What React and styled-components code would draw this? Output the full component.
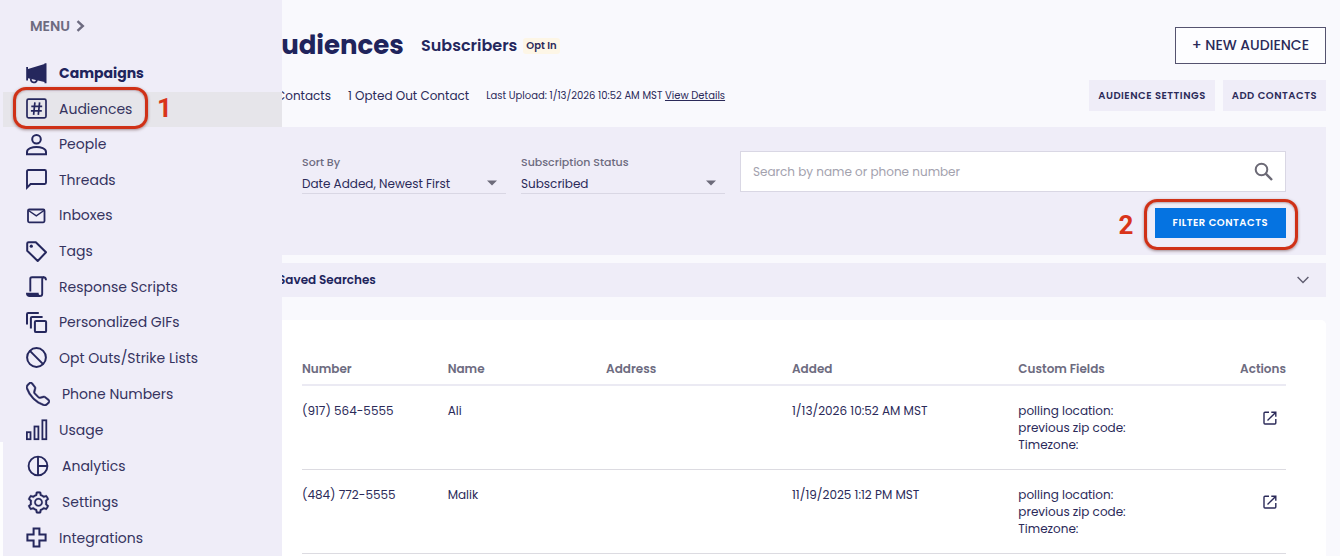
import React, { useState } from "react";
import styled, { createGlobalStyle } from "styled-components";
import { AiOutlineSetting } from "react-icons/ai";
import { BsTelephone } from "react-icons/bs";

const campaigns = (
  <svg width="22" height="22" viewBox="0 0 22 22" fill="none">
    <path
      d="M0.2 4h1.8v2L18.500 1V0.300h2v20h-2v-1.200L2 15.200v2.200H0.200z"
      fill="currentColor"
    />
    <path
      d="M4.900 15.400c-.4 2 .6 3.800 2.600 4 2 .1 3.400-1 3.500-3"
      stroke="currentColor"
      strokeWidth="1.800"
    />
  </svg>
);

const audiences = (
  <svg width="22" height="22" viewBox="0 0 22 22" fill="none" stroke="currentColor">
    <rect x="1" y="1.200" width="19" height="18.600" rx="1.500" strokeWidth="1.700" />
    <path
      d="M8.900 4.300L7.600 16.800M13.600 4.300l-1.300 12.500M5.300 8.300h10.900M4.900 12.800h10.900"
      strokeWidth="1.700"
    />
  </svg>
);

const people = (
  <svg width="22" height="22" viewBox="0 0 22 22" fill="none" stroke="currentColor" strokeWidth="2">
    <circle cx="10.500" cy="5.300" r="4.300" />
    <path d="M1 20.300v-2.300c0-3.500 5.500-5 9.500-5s9.500 1.500 9.500 5v2.300z" />
  </svg>
);

const threads = (
  <svg width="22" height="22" viewBox="0 0 22 22" fill="none" stroke="currentColor" strokeWidth="1.900">
    <path d="M1 18.600V2.400C1 1.600 1.500 1 2.300 1h16.400c.8 0 1.300.600 1.300 1.400v11.200c0 .8-.5 1.400-1.300 1.400H4.600z" />
  </svg>
);

const inboxes = (
  <svg width="22" height="22" viewBox="0 0 22 22" fill="none" stroke="currentColor" strokeWidth="1.800">
    <rect x="2" y="4.500" width="16.500" height="12.800" rx="1.200" />
    <path d="M2.500 5.500l7.800 5.300L18 5.500" strokeWidth="1.500" />
  </svg>
);

const tags = (
  <svg width="22" height="22" viewBox="0 0 22 22" fill="none" stroke="currentColor" strokeWidth="2">
    <path d="M1.200 2.600c0-.9.500-1.400 1.400-1.400h7.200L20 11.300 11.700 20 1.200 9.700z" strokeLinejoin="round" />
    <circle cx="5.300" cy="5.200" r="1.600" fill="currentColor" stroke="none" />
  </svg>
);

const scripts = (
  <svg width="22" height="22" viewBox="0 0 22 22" fill="none" stroke="currentColor" strokeWidth="1.900">
    <path d="M4.300 15.500V2.800C4.300 1.700 5 1.200 6 1.200h11.500c1.700 0 2.500 1 2.500 3M18 1.200c-1.300 0-1.800.8-1.800 2v14.700c0 1.300-.8 2.100-2.100 2.100" />
    <path d="M1 17.700h10.700c0 1.500.8 2.300 2.400 2.300H3.500C1.900 20 1 19.200 1 17.700z" fill="currentColor" />
  </svg>
);

const gifs = (
  <svg width="22" height="22" viewBox="0 0 22 22" fill="none" stroke="currentColor" strokeWidth="2">
    <path d="M1 12.500V2.200C1 1.500 1.500 1 2.200 1h10.600M4.900 16.500V6.100c0-.7.500-1.200 1.200-1.200h10.500" />
    <rect x="8.900" y="8.900" width="11.200" height="11.200" rx="1.200" />
  </svg>
);

const optOuts = (
  <svg width="22" height="22" viewBox="0 0 22 22" fill="none" stroke="currentColor" strokeWidth="2">
    <circle cx="10.500" cy="10.500" r="9.400" />
    <path d="M3.900 3.900l13.200 13.200" />
  </svg>
);

const usage = (
  <svg width="22" height="22" viewBox="0 0 22 22" fill="none" stroke="currentColor" strokeWidth="1.800">
    <rect x="0.900" y="13.200" width="3.600" height="7" />
    <rect x="8.500" y="7.500" width="3.900" height="12.700" />
    <rect x="16.400" y="1.300" width="3.900" height="18.900" />
  </svg>
);

const analytics = (
  <svg width="24" height="24" viewBox="0 0 24 24" fill="none" stroke="currentColor" strokeWidth="1.900">
    <circle cx="12" cy="12" r="9.400" />
    <path d="M12 2.600v18.800M12 12h9.400" />
  </svg>
);

const integrations = (
  <svg width="22" height="22" viewBox="0 0 22 22" fill="none" stroke="currentColor" strokeWidth="2">
    <path d="M7.600 1.400h5.800v6.200h6.200v5.800h-6.200v6.200H7.600v-6.200H1.400V7.600h6.200z" />
  </svg>
);

const mainLinks = [
  { label: "Campaigns", icon: campaigns, bold: true },
  { label: "Audiences", icon: audiences, active: true, step: "1" },
  { label: "People", icon: people },
  { label: "Threads", icon: threads },
  { label: "Inboxes", icon: inboxes },
  { label: "Tags", icon: tags },
  { label: "Response Scripts", icon: scripts },
  { label: "Personalized GIFs", icon: gifs },
  { label: "Opt Outs/Strike Lists", icon: optOuts }
];

const accountLinks = [
  {
    label: "Phone Numbers",
    icon: <BsTelephone size={24} stroke="currentColor" strokeWidth={0.3} />,
    wide: true
  },
  { label: "Usage", icon: usage },
  { label: "Analytics", icon: analytics, wide: true },
  {
    label: "Settings",
    icon: <AiOutlineSetting size={25} stroke="currentColor" strokeWidth={10} />,
    wide: true
  },
  { label: "Integrations", icon: integrations }
];

const contacts = [
  { number: "(917) 564-5555", name: "Ali", added: "1/13/2026 10:52 AM MST" },
  { number: "(484) 772-5555", name: "Malik", added: "11/19/2025 1:12 PM MST" }
];

const customFields = ["polling location:", "previous zip code:", "Timezone:"];

function NavLinks({ links }) {
  return links.map(link => (
    <NavItem key={link.label} $active={link.active}>
      <NavLink href="#" $bold={link.bold}>
        <NavIcon $wide={link.wide}>{link.icon}</NavIcon>
        {link.label}
      </NavLink>
      {link.step && (
        <NavStep>
          <StepRing />
          <StepNumber>{link.step}</StepNumber>
        </NavStep>
      )}
    </NavItem>
  ));
}

function SelectField({ id, label, value }) {
  return (
    <Field>
      <FieldLabel htmlFor={id}>{label}</FieldLabel>
      <SelectWrap>
        <Select id={id} defaultValue={value}>
          <option value={value}>{value}</option>
        </Select>
        <svg width="10" height="6" viewBox="0 0 10 6">
          <path d="M0 0.500h10L5 5.500z" fill="#6d6b7a" />
        </svg>
      </SelectWrap>
    </Field>
  );
}

export default function App() {
  const [search, setSearch] = useState("");

  return (
    <>
      <GlobalStyle />
      <Page>
        <Sidebar>
          <MenuButton type="button">
            MENU
            <svg width="9" height="12" viewBox="0 0 9 12" fill="none">
              <path d="M1.500 1.200L6.800 6l-5.300 4.800" stroke="currentColor" strokeWidth="2.400" />
            </svg>
          </MenuButton>
          <nav>
            <MainList>
              <NavLinks links={mainLinks} />
            </MainList>
            <AccountList>
              <NavLinks links={accountLinks} />
            </AccountList>
          </nav>
        </Sidebar>

        <Main>
          <Header>
            <Title>Audiences</Title>
            <Subtitle>Subscribers</Subtitle>
            <Badge>Opt In</Badge>
            <OutlineButton type="button">+ NEW AUDIENCE</OutlineButton>
          </Header>

          <Summary>
            <Count $first>Contacts</Count>
            <Count>1 Opted Out Contact</Count>
            <Upload>
              Last Upload: 1/13/2026 10:52 AM MST <a href="#">View Details</a>
            </Upload>
            <SoftButton type="button">AUDIENCE SETTINGS</SoftButton>
            <SoftButton type="button">ADD CONTACTS</SoftButton>
          </Summary>

          <Filters onSubmit={event => event.preventDefault()}>
            <SelectField id="sort" label="Sort By" value="Date Added, Newest First" />
            <SelectField id="status" label="Subscription Status" value="Subscribed" />
            <SearchColumn>
              <SearchBox>
                <SearchInput
                  type="text"
                  aria-label="Search by name or phone number"
                  placeholder="Search by name or phone number"
                  value={search}
                  onChange={event => setSearch(event.target.value)}
                />
                <svg width="20" height="20" viewBox="0 0 20 20" fill="none" stroke="#6b6975">
                  <circle cx="7.500" cy="7.500" r="5.800" strokeWidth="2" />
                  <path d="M11.700 11.700l6.300 6.300" strokeWidth="2.400" />
                </svg>
              </SearchBox>
              <FilterAction>
                <FilterButton type="submit">FILTER CONTACTS</FilterButton>
                <FilterStep>
                  <StepNumber>2</StepNumber>
                  <StepRing />
                </FilterStep>
              </FilterAction>
            </SearchColumn>
          </Filters>

          <SavedSearches type="button">
            Saved Searches
            <svg width="12" height="8" viewBox="0 0 12 8" fill="none">
              <path d="M0.600 1L6 6.500 11.400 1" stroke="#5f5d70" strokeWidth="1.400" />
            </svg>
          </SavedSearches>

          <Card>
            <Table>
              <colgroup>
                <Col $width="14.8%" />
                <Col $width="16.1%" />
                <Col $width="18.9%" />
                <Col $width="23%" />
                <Col $width="19.2%" />
                <Col $width="8%" />
              </colgroup>
              <thead>
                <tr>
                  <Th>Number</Th>
                  <Th>Name</Th>
                  <Th>Address</Th>
                  <Th>Added</Th>
                  <Th>Custom Fields</Th>
                  <Th $right>Actions</Th>
                </tr>
              </thead>
              <tbody>
                {contacts.map(contact => (
                  <tr key={contact.number}>
                    <Td>{contact.number}</Td>
                    <Td>{contact.name}</Td>
                    <Td />
                    <Td>{contact.added}</Td>
                    <Td>
                      {customFields.map(field => (
                        <div key={field}>{field}</div>
                      ))}
                    </Td>
                    <Td $right>
                      <OpenButton type="button" aria-label="Open">
                        <svg width="14" height="14" viewBox="0 0 14 14" fill="none" stroke="currentColor" strokeWidth="1.400">
                          <path d="M6 1.200H2c-.6 0-1 .4-1 1V12c0 .6.400 1 1 1h9.800c.6 0 1-.4 1-1V8M8.300 1.200h4.500v4.500M12.600 1.400L4.500 9.500" />
                        </svg>
                      </OpenButton>
                    </Td>
                  </tr>
                ))}
              </tbody>
            </Table>
          </Card>
        </Main>
      </Page>
    </>
  );
}

const GlobalStyle = createGlobalStyle`
  * {
    box-sizing: border-box;
  }
  body {
    margin: 0;
    background: #f9f9fd;
    color: #2b2a59;
    font-family: Poppins, Inter, "Liberation Sans", sans-serif;
    font-feature-settings: "cv11";
    font-size: 12px;
  }
  button, input, select {
    font: inherit;
    font-feature-settings: inherit;
    color: inherit;
  }
  button {
    cursor: pointer;
  }
  svg {
    display: block;
    flex: none;
  }
`;

const Page = styled.div`
  min-height: 100vh;
`;

const Sidebar = styled.aside`
  position: fixed;
  top: 0;
  bottom: 0;
  left: 0;
  z-index: 1;
  width: 282px;
  padding: 16px 0 0 3px;
  background: linear-gradient(transparent 442px, #fdfdfe 442px) left / 3px 100%
      no-repeat,
    #efedf8;
`;

const MenuButton = styled.button`
  display: flex;
  align-items: center;
  gap: 6px;
  height: 20px;
  margin: 0 0 20px 27px;
  padding: 0;
  border: 0;
  background: none;
  color: #6d6b80;
  font-size: 14px;
  font-weight: 600;
`;

const NavList = styled.ul`
  display: grid;
  grid-auto-rows: 1fr;
  margin: 0;
  padding: 0;
  list-style: none;
`;

const MainList = styled(NavList)`
  height: 320px;
`;

const AccountList = styled(NavList)`
  height: 180px;
`;

const NavItem = styled.li`
  position: relative;
  display: flex;
  background: ${props => (props.$active ? "#e6e5ea" : "none")};
`;

const NavLink = styled.a`
  display: flex;
  align-items: center;
  flex: 1;
  padding-left: 23px;
  color: ${props => (props.$bold ? "#20245c" : "#35335f")};
  font-size: 14px;
  font-weight: ${props => (props.$bold ? 700 : 400)};
  text-decoration: none;
`;

const NavIcon = styled.span`
  width: ${props => (props.$wide ? 36 : 33)}px;
  color: #25275d;
`;

const StepRing = styled.span`
  flex: 1;
  align-self: stretch;
  border: 3px solid #cf3117;
  border-radius: 13px;
  box-shadow: 0 1px 3px rgba(80, 40, 40, 0.5),
    inset 0 1px 2px rgba(80, 40, 40, 0.35);
`;

const StepNumber = styled.span`
  color: #d9341a;
  font-family: Roboto, "Liberation Sans", sans-serif;
  font-size: 26px;
  font-weight: 700;
`;

const NavStep = styled.span`
  position: absolute;
  top: -5px;
  bottom: -2px;
  left: 10px;
  display: flex;
  align-items: center;
  gap: 9px;
  width: 159px;
  pointer-events: none;
`;

const FilterStep = styled.span`
  position: absolute;
  top: -9px;
  right: -12px;
  bottom: -12px;
  left: -36px;
  display: flex;
  align-items: center;
  gap: 10px;
  pointer-events: none;
`;

const Main = styled.main`
  display: flex;
  flex-direction: column;
  min-height: 100vh;
  padding: 27px 14px 0 262px;
`;

const Header = styled.header`
  display: flex;
  align-items: center;
  height: 37px;
`;

const Title = styled.h1`
  width: 159px;
  margin: 0;
  color: #20245c;
  font-size: 26px;
  font-weight: 700;
`;

const Subtitle = styled.h2`
  margin: 0 6px 0 0;
  color: #25275d;
  font-size: 16px;
  font-weight: 600;
`;

const Badge = styled.span`
  padding: 0 3px;
  border-radius: 3px;
  background: #fdf6e6;
  font-size: 10px;
  font-weight: 600;
  line-height: 16px;
`;

const OutlineButton = styled.button`
  height: 37px;
  margin-left: auto;
  padding: 0 16px;
  border: 1px solid #55536f;
  background: #fdfdff;
  font-size: 14px;
  font-weight: 500;
`;

const Summary = styled.div`
  display: flex;
  align-items: center;
  margin: 16px 0;
`;

const Count = styled.span`
  width: ${props => (props.$first ? "69px" : "auto")};
  margin-right: 17px;
  text-align: right;
`;

const Upload = styled.span`
  margin-right: auto;
  font-size: 10px;

  a {
    color: inherit;
  }
`;

const SoftButton = styled.button`
  height: 31px;
  margin-left: 8px;
  padding: 0 9px;
  border: 0;
  background: #efedf8;
  font-size: 10px;
  font-weight: 600;
  letter-spacing: 0.05em;
`;

const Filters = styled.form`
  display: grid;
  grid-template-columns: 204px 204px 1fr;
  gap: 15px;
  padding: 24px 40px 17px;
  background: #efedf8;
`;

const Field = styled.div`
  padding-top: 4px;
`;

const FieldLabel = styled.label`
  display: block;
  color: #6d6b80;
  font-size: 11px;
  font-weight: 500;
  line-height: 14px;
`;

const SelectWrap = styled.div`
  display: flex;
  align-items: center;
  margin-top: 4px;
  padding-right: 9px;
  border-bottom: 1px solid #d9d7e4;
`;

const Select = styled.select`
  flex: 1;
  min-width: 0;
  height: 20px;
  margin-right: -10px;
  padding: 0;
  border: 0;
  appearance: none;
  background: none;
`;

const SearchColumn = styled.div`
  display: flex;
  flex-direction: column;
  align-items: flex-end;
  gap: 16px;
`;

const SearchBox = styled.div`
  display: flex;
  align-items: center;
  width: 100%;
  height: 41px;
  padding: 0 11px 0 12px;
  border: 1px solid #d9d7e4;
  background: #fff;
`;

const SearchInput = styled.input`
  flex: 1;
  padding: 0;
  border: 0;
  outline: 0;
  background: none;

  &::placeholder {
    color: #a3a2ae;
  }
`;

const FilterAction = styled.div`
  position: relative;
`;

const FilterButton = styled.button`
  display: block;
  height: 30px;
  padding: 0 18px;
  border: 0;
  background: #0573e1;
  color: #fff;
  font-size: 10px;
  font-weight: 600;
  letter-spacing: 0.05em;
`;

const SavedSearches = styled.button`
  display: flex;
  align-items: center;
  justify-content: space-between;
  width: 100%;
  height: 34px;
  margin: 8px 0 23px;
  padding: 0 17px 0 16px;
  border: 0;
  background: #efedf8;
  color: #20245c;
  font-weight: 600;
`;

const Card = styled.section`
  flex: 1;
  padding: 32px 40px 0;
  border-radius: 5px 5px 0 0;
  background: #fff;
`;

const Table = styled.table`
  width: 100%;
  table-layout: fixed;
  border-collapse: separate;
  border-spacing: 0;
  line-height: 17px;
`;

const Col = styled.col`
  width: ${props => props.$width};
`;

const Th = styled.th`
  padding: 8px 0 7px;
  border-bottom: 2px solid #ebeaf3;
  color: #6d6b80;
  font-weight: 600;
  text-align: ${props => (props.$right ? "right" : "left")};
`;

const Td = styled.td`
  padding: 16px 0;
  border-bottom: 1px solid #dcdbe1;
  text-align: ${props => (props.$right ? "right" : "left")};
  vertical-align: top;
`;

const OpenButton = styled.button`
  padding: 9px;
  border: 0;
  background: none;
`;
